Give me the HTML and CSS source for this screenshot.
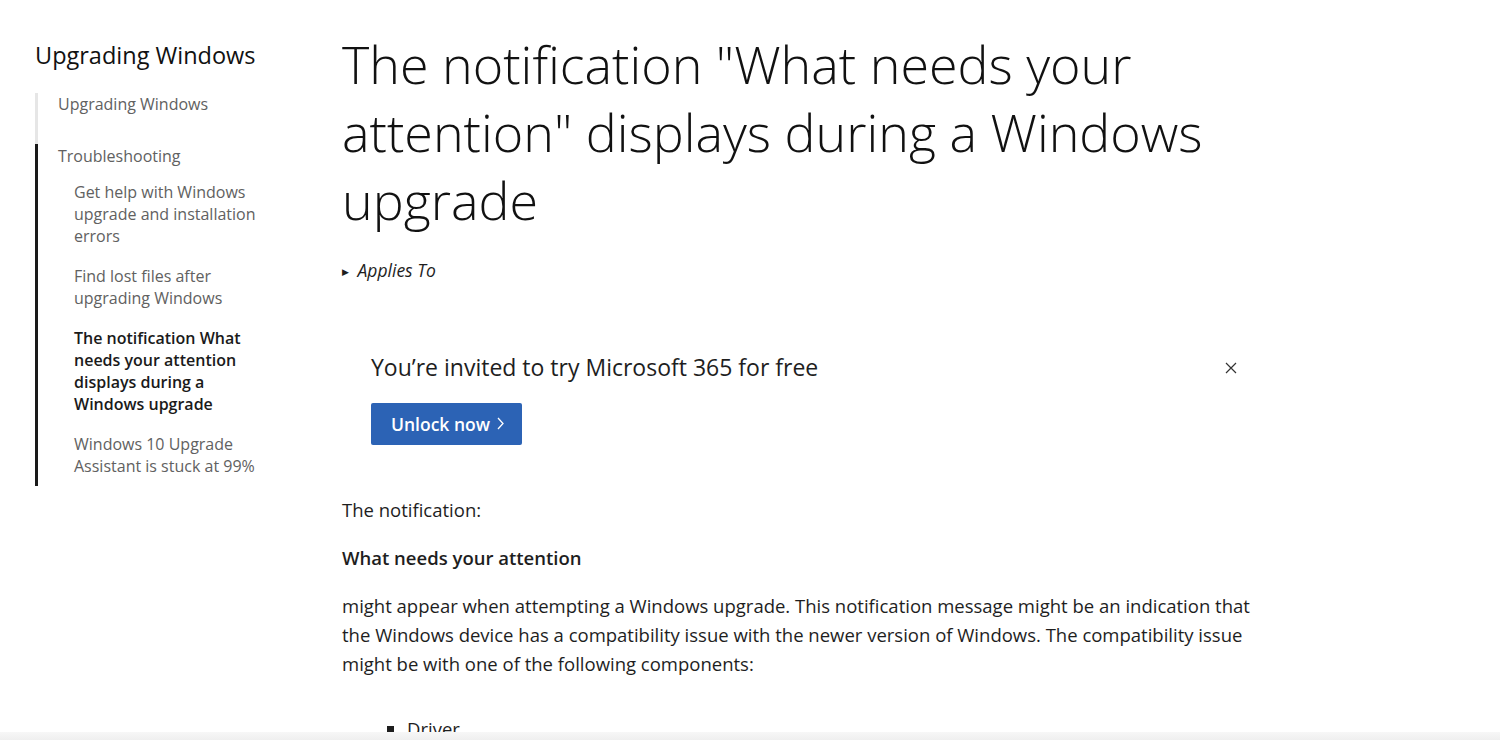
FILE: index.html
```html
<!DOCTYPE html>
<html>
<head>
  <title>The notification "What needs your attention" displays during a Windows upgrade</title>
  <link rel="stylesheet" href="styles.css">
</head>
<body>
  <div class="page">
    <nav class="side-nav">
      <h2 class="nav-title">Upgrading Windows</h2>
      <ul class="nav-list">
        <li class="nav-group">
          <a class="nav-link">Upgrading Windows</a>
        </li>
        <li class="nav-group current">
          <a class="nav-link">Troubleshooting</a>
          <ul class="nav-sub">
            <li><a class="nav-link">Get help with Windows upgrade and installation errors</a></li>
            <li><a class="nav-link">Find lost files after upgrading Windows</a></li>
            <li><a class="nav-link active">The notification What needs your attention displays during a Windows upgrade</a></li>
            <li><a class="nav-link">Windows 10 Upgrade Assistant is stuck at 99%</a></li>
          </ul>
        </li>
      </ul>
    </nav>

    <main class="article">
      <h1 class="article-title">The notification "What needs your attention" displays during a Windows upgrade</h1>

      <div class="applies-to"><span class="caret">&#9654;</span> Applies To</div>

      <div class="promo">
        <div class="promo-text">
          <p class="promo-heading">You’re invited to try Microsoft 365 for free</p>
          <a class="promo-button">Unlock now
            <svg class="chev" width="7" height="13" viewBox="0 0 7 13"><path d="M1 1 L6 6.5 L1 12" stroke="#fff" stroke-width="1.3" fill="none"/></svg>
          </a>
        </div>
        <button class="promo-close" aria-label="Close">
          <svg width="12" height="12" viewBox="0 0 12 12"><path d="M1 1 L11 11 M11 1 L1 11" stroke="#333" stroke-width="1.2" fill="none"/></svg>
        </button>
      </div>

      <p class="body-text">The notification:</p>
      <p class="body-text strong">What needs your attention</p>
      <p class="body-text">might appear when attempting a Windows upgrade. This notification message might be an indication that the Windows device has a compatibility issue with the newer version of Windows. The compatibility issue might be with one of the following components:</p>
      <ul class="body-list">
        <li>Driver</li>
        <li>Application</li>
      </ul>
    </main>
  </div>
  <div class="bottom-bar"></div>
</body>
</html>
```

FILE: styles.css
```css
/* page layout */

body {
  margin: 0;
  font-family: "Open Sans", "Noto Sans", sans-serif;
  color: #1e1e1e;
  background-color: #fff;
  overflow: hidden;
}

.page {
  display: flex;
  padding-left: 35px;
}

/* left navigation */

.side-nav {
  width: 229px;
  flex-shrink: 0;
  padding-top: 39px;
}

.nav-title {
  margin: 0 0 22px 0;
  font-size: 23.5px;
  font-weight: 400;
  line-height: 32px;
  color: #111;
}

.nav-list,
.nav-sub {
  list-style: none;
  margin: 0;
  padding: 0;
}

.nav-group {
  border-left: 3px solid #e6e6e6;
  padding: 0 0 29px 20px;
}

.nav-group.current {
  border-left-color: #1a1a1a;
  padding-top: 1px;
  padding-bottom: 9px;
}

.nav-link {
  display: block;
  font-size: 16px;
  line-height: 22px;
  color: #616161;
}

.nav-sub {
  padding-left: 16px;
  margin-top: 14px;
}

.nav-sub li {
  margin-bottom: 18px;
}

.nav-sub li:last-child {
  margin-bottom: 0;
}

.nav-link.active {
  color: #1a1a1a;
  font-weight: 600;
}

/* article */

.article {
  margin-left: 78px;
  width: 912px;
}

.article-title {
  margin: 30px 0 0 0;
  font-size: 52px;
  font-weight: 300;
  line-height: 68px;
  color: #111;
}

.applies-to {
  margin-top: 24px;
  font-size: 17.5px;
  font-style: italic;
  line-height: 24px;
}

.caret {
  font-size: 9px;
  font-style: normal;
  vertical-align: 2px;
  margin-right: 4px;
}

.promo {
  display: flex;
  justify-content: space-between;
  align-items: flex-start;
  margin-top: 67px;
  padding: 0 17px 0 29px;
}

.promo-heading {
  margin: 0;
  font-size: 23px;
  line-height: 32px;
}

.promo-button {
  display: inline-flex;
  align-items: center;
  gap: 7px;
  margin-top: 20px;
  height: 42px;
  padding: 0 18px 0 20px;
  box-sizing: border-box;
  background-color: #2c63b5;
  border-radius: 2px;
  color: #fff;
  font-size: 17.5px;
  font-weight: 600;
}

.chev {
  margin-top: -2px;
}

.promo-close {
  border: none;
  background: none;
  padding: 0;
  margin-top: 11px;
  cursor: pointer;
}

.body-text {
  margin: 0;
  font-size: 18.5px;
  line-height: 29px;
}

.promo + .body-text {
  margin-top: 50px;
}

.body-text + .body-text {
  margin-top: 19px;
}

.body-text.strong {
  font-weight: 600;
}

.body-list {
  margin: 36px 0 0 0;
  padding-left: 65px;
  list-style: square;
  font-size: 18.5px;
  line-height: 29px;
}

/* grey strip along the bottom of the window */

.bottom-bar {
  position: fixed;
  left: 0;
  right: 0;
  bottom: 0;
  height: 8px;
  background: linear-gradient(#f7f7f7, #efefef);
}
```
